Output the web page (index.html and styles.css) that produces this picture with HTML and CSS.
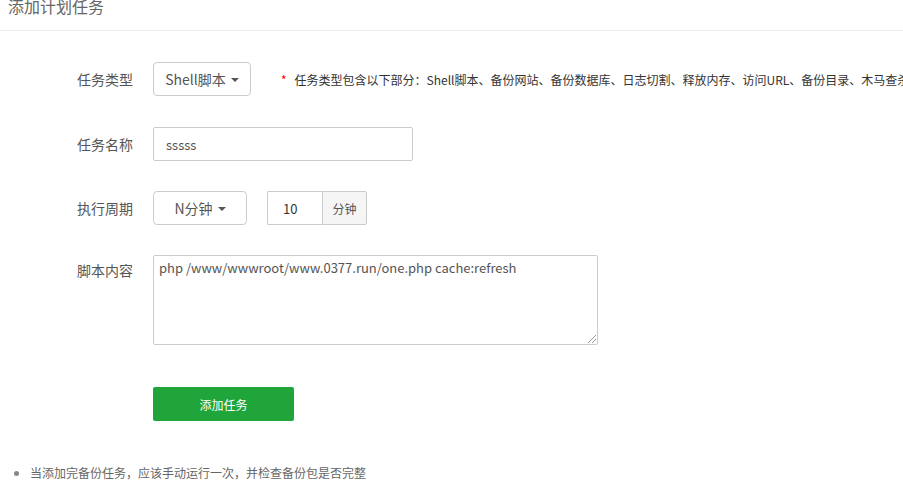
FILE: index.html
```html
<!DOCTYPE html>
<html lang="zh-CN">
<head>
<meta charset="utf-8">
<title>添加计划任务</title>
<link rel="stylesheet" href="styles.css">
</head>
<body>
<div class="page">
  <div class="title">添加计划任务</div>
  <div class="form">
    <div class="row row-first">
      <div class="label">任务类型</div>
      <div class="select sel-type">Shell脚本 <span class="caret"></span></div>
      <div class="tip"><span class="star">*</span>任务类型包含以下部分：Shell脚本、备份网站、备份数据库、日志切割、释放内存、访问URL、备份目录、木马查杀</div>
    </div>
    <div class="row">
      <div class="label">任务名称</div>
      <div class="input name">sssss</div>
    </div>
    <div class="row">
      <div class="label">执行周期</div>
      <div class="select sel-cycle">N分钟 <span class="caret"></span></div>
      <div class="group">
        <div class="group-input">10</div>
        <div class="addon">分钟</div>
      </div>
    </div>
    <div class="row row-text">
      <div class="label">脚本内容</div>
      <div class="textarea">php /www/wwwroot/www.0377.run/one.php cache:refresh<span class="grip"></span></div>
    </div>
    <div class="row row-btn">
      <div class="label"></div>
      <div class="btn">添加任务</div>
    </div>
  </div>
  <ul class="notes">
    <li>当添加完备份任务，应该手动运行一次，并检查备份包是否完整</li>
  </ul>
</div>
</body>
</html>
```
FILE: styles.css
```css
html, body {
  margin: 0;
  padding: 0;
  overflow: hidden;
  background: #fff;
}
body {
  font-family: "Noto Sans CJK SC", "Open Sans", sans-serif;
  color: #555;
  width: 903px;
  height: 480px;
}
.page {
  position: relative;
}
.title {
  font-size: 16px;
  color: #666;
  line-height: 20px;
  padding: 0 0 0 8px;
  margin-top: -4px;
  height: 35px;
  border-bottom: 1px solid #eee;
  box-sizing: border-box;
}
.form {
  padding-top: 31px;
}
.row {
  display: flex;
  align-items: center;
  height: 34px;
  margin-bottom: 30px;
  white-space: nowrap;
}
.row-first {
  margin-bottom: 31px;
}
.row-text {
  height: 90px;
  align-items: flex-start;
  margin-bottom: 42px;
}
.row-btn {
  margin-bottom: 0;
}
.label {
  width: 133px;
  flex: none;
  text-align: right;
  margin-right: 20px;
  font-size: 14px;
  color: #555;
}
.row-text .label {
  padding-top: 5px;
}
.select {
  box-sizing: border-box;
  height: 34px;
  border: 1px solid #ccc;
  border-radius: 4px;
  display: flex;
  align-items: center;
  justify-content: center;
  font-size: 14px;
  color: #555;
  flex: none;
}
.sel-type { width: 98px; }
.sel-cycle { width: 94px; }
.caret {
  display: inline-block;
  width: 0;
  height: 0;
  border-left: 4px solid transparent;
  border-right: 4px solid transparent;
  border-top: 4px solid #555;
  margin-left: 5px;
  margin-top: 2px;
}
.tip {
  font-size: 12px;
  color: #333;
  margin-left: 30px;
}
.star {
  color: #f00;
  margin-right: 8px;
}
.input {
  box-sizing: border-box;
  height: 34px;
  border: 1px solid #ccc;
  border-radius: 2px;
  padding: 0 12px;
  display: flex;
  align-items: center;
  font-size: 13px;
  color: #555;
}
.name { width: 260px; }
.group {
  display: flex;
  margin-left: 20px;
  height: 34px;
}
.group-input {
  box-sizing: border-box;
  width: 55px;
  border: 1px solid #ccc;
  border-right: none;
  border-radius: 2px 0 0 2px;
  display: flex;
  align-items: center;
  padding-left: 15px;
  font-size: 13px;
  color: #333;
}
.addon {
  box-sizing: border-box;
  width: 45px;
  border: 1px solid #ccc;
  background: #f5f5f5;
  border-radius: 0 2px 2px 0;
  display: flex;
  align-items: center;
  justify-content: center;
  font-size: 12px;
  color: #555;
}
.textarea {
  position: relative;
  box-sizing: border-box;
  width: 445px;
  height: 90px;
  border: 1px solid #ccc;
  border-radius: 2px;
  padding: 3px 5px;
  font-size: 13px;
  line-height: 18px;
  color: #555;
}
.grip {
  position: absolute;
  right: 1px;
  bottom: 1px;
  width: 8px;
  height: 8px;
  background: linear-gradient(135deg, transparent 45%, #999 45%, #999 52%, transparent 52%, transparent 70%, #999 70%, #999 77%, transparent 77%);
}
.btn {
  box-sizing: border-box;
  width: 141px;
  height: 34px;
  background: #20a53a;
  border-radius: 2px;
  color: #fff;
  font-size: 12px;
  display: flex;
  align-items: center;
  justify-content: center;
}
.notes {
  margin: 42px 0 0 0;
  padding: 0 0 0 30px;
  font-size: 12px;
  color: #666;
  list-style: none;
}
.notes li {
  position: relative;
  line-height: 20px;
}
.notes li::before {
  content: "";
  position: absolute;
  left: -16px;
  top: 8px;
  width: 5px;
  height: 5px;
  border-radius: 50%;
  background: #888;
}
```
